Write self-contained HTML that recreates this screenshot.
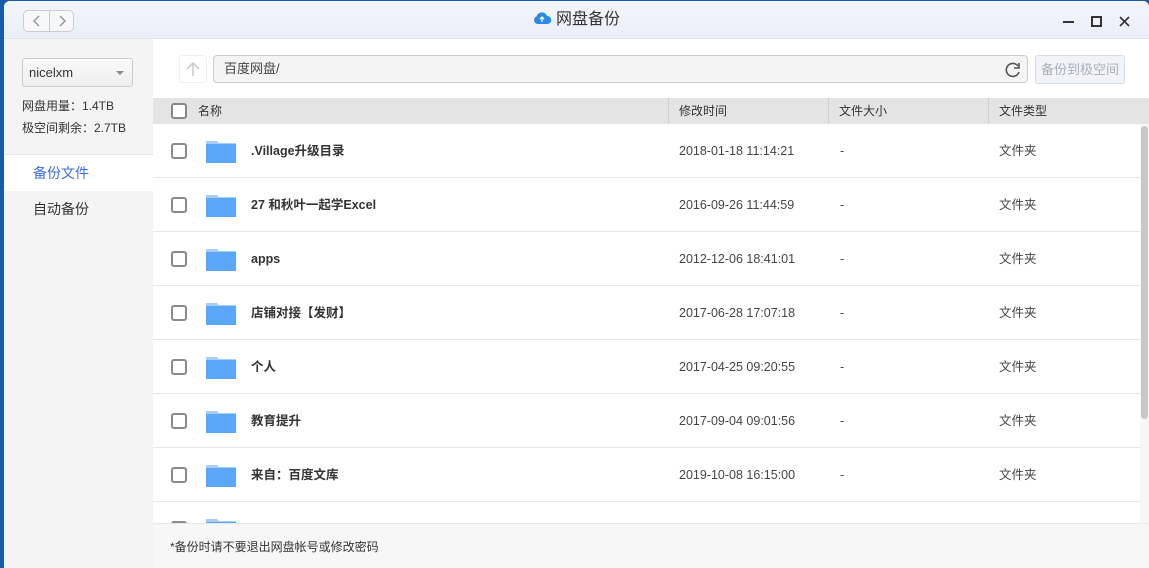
<!DOCTYPE html>
<html><head><meta charset="utf-8"><style>
*{margin:0;padding:0;box-sizing:border-box}
body{width:1149px;height:568px;overflow:hidden;background:#1a5aa8;font-family:"Liberation Sans","Noto Sans CJK SC",sans-serif;font-size:13px;color:#333;position:relative}
.win{position:absolute;left:4px;top:1px;right:0;bottom:0;background:#fff;border-radius:6px 6px 0 0;overflow:hidden}
.title{position:absolute;left:0;top:0;right:0;height:38px;background:linear-gradient(#f3f6fc,#e9eef8);border-bottom:1px solid #e0e4ea}
.nav{position:absolute;left:19px;top:9px;width:51px;height:22px;border:1px solid #c9cdd3;border-radius:5px;background:#f7f8fa}
.nav div{position:absolute;top:0;width:25px;height:20px}
.nav .sep{position:absolute;left:25px;top:0;width:1px;height:20px;background:#c9cdd3}
.ttl{position:absolute;top:0;height:38px;line-height:38px;font-size:16px;color:#333}
.side{position:absolute;left:0;top:38px;width:149px;bottom:0;background:#f4f4f4}
.sel{position:absolute;left:18px;top:19px;width:111px;height:29px;border:1px solid #ccc;border-radius:3px;background:linear-gradient(#fafafa,#eee);padding:0 6px;line-height:27px;font-size:13px;color:#333}
.sel:after{content:"";position:absolute;right:8px;top:12px;border:4px solid transparent;border-top:4px solid #888}
.info{position:absolute;left:18px;font-size:12px;color:#333;line-height:16px}
.menu{position:absolute;left:0;width:149px;height:36px;line-height:36px;padding-left:29px;font-size:14px}
.main{position:absolute;left:149px;top:38px;right:0;bottom:0}
.up{position:absolute;left:26px;top:16px;width:28px;height:28px;border:1px solid #f0f0f0;border-radius:3px}
.path{position:absolute;left:60px;top:16px;width:815px;height:28px;border:1px solid #ccc;border-radius:4px;background:#f4f4f4;padding:0 10px;line-height:26px;font-size:13px;color:#444}
.btn{position:absolute;left:882px;top:16px;width:90px;height:29px;border:1px solid #d8dde4;border-radius:3px;background:#f0f3f7;color:#a9afb8;font-size:13px;line-height:27px;text-align:center}
.hdr{position:absolute;left:0;top:59px;width:996px;height:26px;background:#e4e4e4;font-size:12px;color:#333}
.hdr span{position:absolute;top:0;line-height:26px}
.hdr i{position:absolute;top:0;width:1px;height:26px;background:#d0d0d0}
.cb{position:absolute;width:16px;height:16px;border:2px solid #8a8a8a;border-radius:3px;background:#fff}
.row{position:absolute;left:0;width:987px;height:54px;border-bottom:1px solid #e8e8e8}
.row span.x{position:absolute;top:0;line-height:54px;font-size:12.5px;color:#444}
.row .n{left:98px;font-weight:bold;color:#333!important}
.row .d{left:526px}
.row .s{left:687px}
.row .t{left:846px}
.fold{position:absolute;left:53px;top:15px;width:30px;height:24px}
.foot{position:absolute;left:0;top:484px;right:0;bottom:0;background:#f7f7f7;border-top:1px solid #e8e8e8;font-size:12px;padding-left:17px;line-height:46px;color:#333}
.sb{position:absolute;left:987px;top:85px;width:9px;height:400px;background:#f7f7f7}
.sb div{position:absolute;left:1px;top:2px;width:7px;height:293px;background:#c8c8c8;border-radius:4px}
</style></head><body>
<div class="win">
<div class="title">
 <div class="nav"><div style="left:0"><svg width="25" height="20"><path d="M15 5 L10 10 L15 15" fill="none" stroke="#999" stroke-width="1.5"/></svg></div><span class="sep"></span><div style="left:26px"><svg width="25" height="20"><path d="M10 5 L15 10 L10 15" fill="none" stroke="#999" stroke-width="1.5"/></svg></div></div>
 <svg style="position:absolute;left:528px;top:10px" width="20" height="14"><path d="M5 13 A4 4 0 0 1 4.5 5.5 A5.5 5.5 0 0 1 15 5 A4 4 0 0 1 15.5 13 Z" fill="#2c8ae6"/><path d="M10 11V6M8 8l2-2 2 2" stroke="#fff" stroke-width="1.3" fill="none"/></svg>
 <div class="ttl" style="left:552px">网盘备份</div>
 <svg style="position:absolute;left:1057px;top:14px" width="80" height="14"><path d="M2 7h11" stroke="#333" stroke-width="2"/><rect x="31" y="2" width="9" height="9" fill="none" stroke="#333" stroke-width="2"/><path d="M59 2l9 9M68 2l-9 9" stroke="#333" stroke-width="1.6"/></svg>
</div>
<div class="side">
 <div class="sel">nicelxm</div>
 <div class="info" style="top:59px">网盘用量：1.4TB</div>
 <div class="info" style="top:81px">极空间剩余：2.7TB</div>
 <div style="position:absolute;left:0;top:115px;width:149px;border-top:1px dotted #ddd"></div>
 <div class="menu" style="top:116px;background:#fff;color:#3b6fd6">备份文件</div>
 <div class="menu" style="top:152px">自动备份</div>
</div>
<div class="main">
 <div class="up"><svg width="26" height="26"><path d="M13 20V7M7 13l6-6 6 6" fill="none" stroke="#ccc" stroke-width="1.6"/></svg></div>
 <div class="path">百度网盘/</div>
 <svg style="position:absolute;left:851px;top:22px" width="18" height="18"><path d="M14 5 A6.5 6.5 0 1 0 15 11" fill="none" stroke="#555" stroke-width="1.6"/><path d="M15 2v5h-5" fill="none" stroke="#555" stroke-width="1.6"/></svg>
 <div class="btn">备份到极空间</div>
 <div class="hdr"><span class="cb" style="left:18px;top:5px;border-color:#888"></span><span style="left:45px">名称</span><i style="left:515px"></i><span style="left:526px">修改时间</span><i style="left:675px"></i><span style="left:686px">文件大小</span><i style="left:835px"></i><span style="left:846px">文件类型</span></div>
 <div class="sb"><div></div></div>
 <div style="position:absolute;left:0;top:85px;width:987px;height:399px;overflow:hidden">
  <div class="row" style="top:0"><span class="cb" style="left:18px;top:19px"></span><svg class="fold" viewBox="0 0 30 24"><path d="M0 2h11l2 2h17v20H0z" fill="#a8cdfa"/><rect y="5" width="30" height="19" fill="#5aa7fa"/></svg><span class="x n">.Village升级目录</span><span class="x d">2018-01-18 11:14:21</span><span class="x s">-</span><span class="x t">文件夹</span></div>
  <div class="row" style="top:54px"><span class="cb" style="left:18px;top:19px"></span><svg class="fold" viewBox="0 0 30 24"><path d="M0 2h11l2 2h17v20H0z" fill="#a8cdfa"/><rect y="5" width="30" height="19" fill="#5aa7fa"/></svg><span class="x n">27 和秋叶一起学Excel</span><span class="x d">2016-09-26 11:44:59</span><span class="x s">-</span><span class="x t">文件夹</span></div>
  <div class="row" style="top:108px"><span class="cb" style="left:18px;top:19px"></span><svg class="fold" viewBox="0 0 30 24"><path d="M0 2h11l2 2h17v20H0z" fill="#a8cdfa"/><rect y="5" width="30" height="19" fill="#5aa7fa"/></svg><span class="x n">apps</span><span class="x d">2012-12-06 18:41:01</span><span class="x s">-</span><span class="x t">文件夹</span></div>
  <div class="row" style="top:162px"><span class="cb" style="left:18px;top:19px"></span><svg class="fold" viewBox="0 0 30 24"><path d="M0 2h11l2 2h17v20H0z" fill="#a8cdfa"/><rect y="5" width="30" height="19" fill="#5aa7fa"/></svg><span class="x n">店铺对接【发财】</span><span class="x d">2017-06-28 17:07:18</span><span class="x s">-</span><span class="x t">文件夹</span></div>
  <div class="row" style="top:216px"><span class="cb" style="left:18px;top:19px"></span><svg class="fold" viewBox="0 0 30 24"><path d="M0 2h11l2 2h17v20H0z" fill="#a8cdfa"/><rect y="5" width="30" height="19" fill="#5aa7fa"/></svg><span class="x n">个人</span><span class="x d">2017-04-25 09:20:55</span><span class="x s">-</span><span class="x t">文件夹</span></div>
  <div class="row" style="top:270px"><span class="cb" style="left:18px;top:19px"></span><svg class="fold" viewBox="0 0 30 24"><path d="M0 2h11l2 2h17v20H0z" fill="#a8cdfa"/><rect y="5" width="30" height="19" fill="#5aa7fa"/></svg><span class="x n">教育提升</span><span class="x d">2017-09-04 09:01:56</span><span class="x s">-</span><span class="x t">文件夹</span></div>
  <div class="row" style="top:324px"><span class="cb" style="left:18px;top:19px"></span><svg class="fold" viewBox="0 0 30 24"><path d="M0 2h11l2 2h17v20H0z" fill="#a8cdfa"/><rect y="5" width="30" height="19" fill="#5aa7fa"/></svg><span class="x n">来自：百度文库</span><span class="x d">2019-10-08 16:15:00</span><span class="x s">-</span><span class="x t">文件夹</span></div>
  <div class="row" style="top:378px"><span class="cb" style="left:18px;top:19px"></span><svg class="fold" viewBox="0 0 30 24"><path d="M0 2h11l2 2h17v20H0z" fill="#a8cdfa"/><rect y="5" width="30" height="19" fill="#5aa7fa"/></svg></div>
 </div>
 <div class="foot">*备份时请不要退出网盘帐号或修改密码</div>
</div>
</div>
</body></html>
